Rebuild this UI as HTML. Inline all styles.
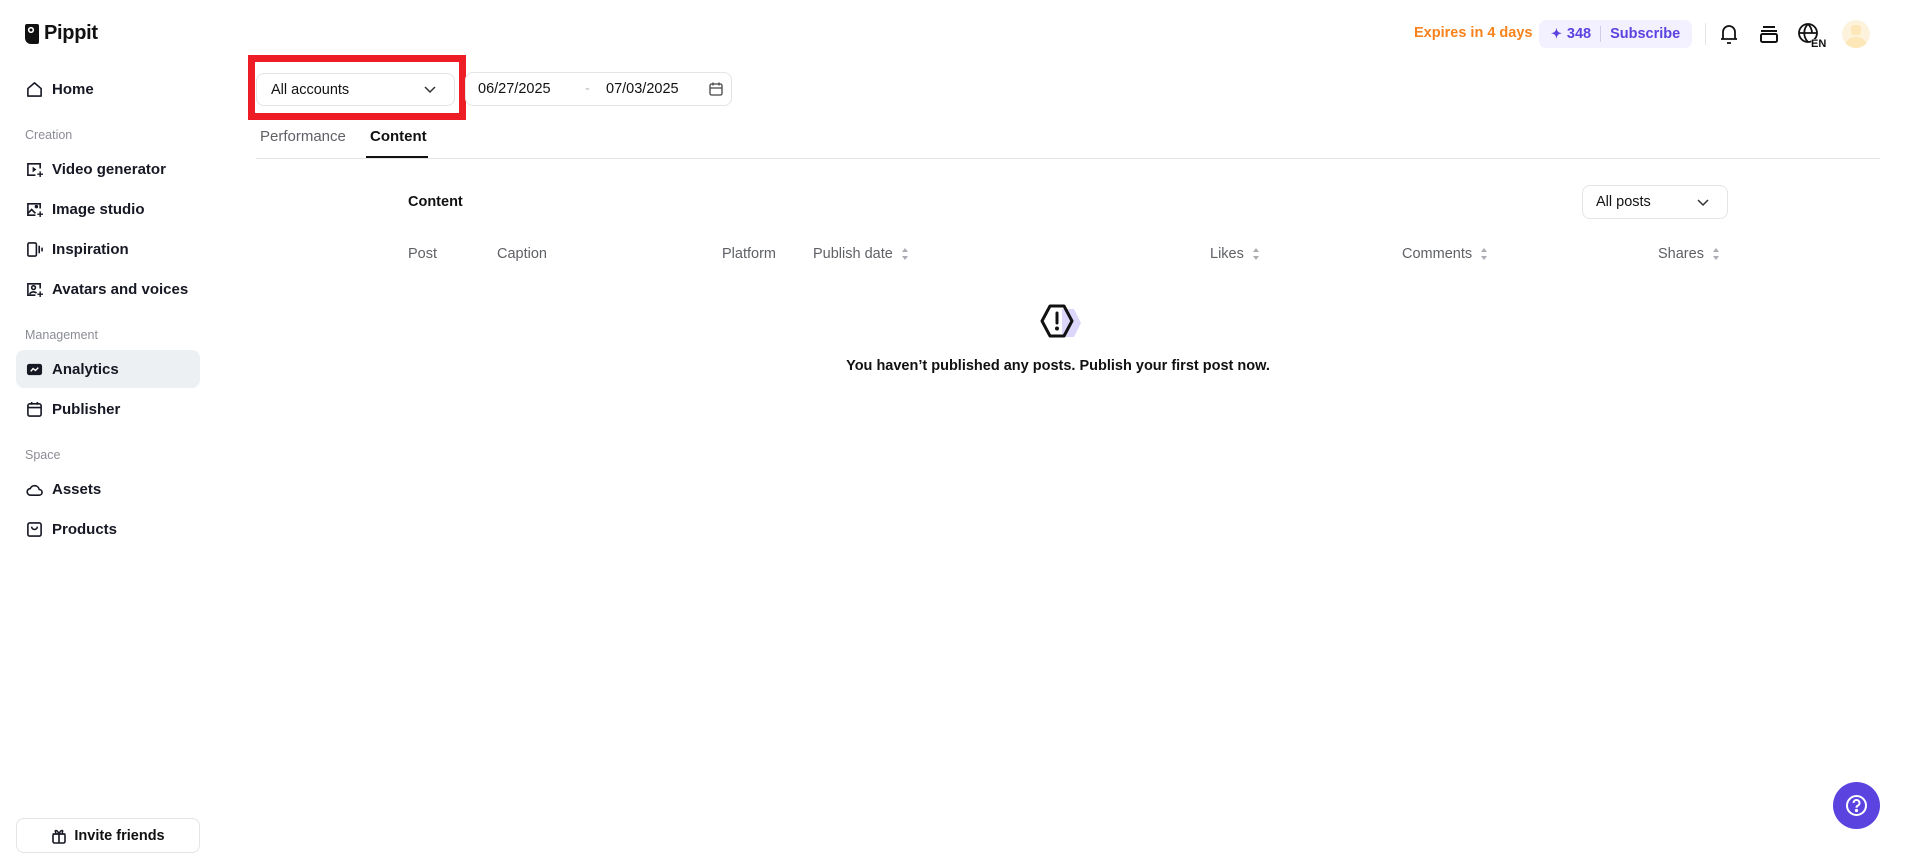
<!DOCTYPE html>
<html><head><meta charset="utf-8"><style>
*{box-sizing:border-box;margin:0;padding:0}
body{width:1920px;height:866px;background:#fff;font-family:"Liberation Sans",sans-serif;color:#111;position:relative;overflow:hidden}
.a{position:absolute;white-space:nowrap}
.nav{position:absolute;left:26px;font-size:15px;font-weight:bold;color:#161823;display:flex;align-items:center;height:20px;transform:translateY(-10px)}
.nav svg{width:17px;height:17px;margin-right:9px}
.lbl{position:absolute;left:25px;font-size:12.5px;color:#8a8d93;transform:translateY(-8px)}
.th{position:absolute;top:246px;font-size:14.5px;color:#5f6166}
.sort{display:inline-block;vertical-align:middle;margin-left:8px}
</style></head><body>
<div class="a" style="left:25px;top:22px;display:flex;align-items:center">
<svg width="14" height="21" viewBox="0 0 14 21"><path d="M2 1h10a2 2 0 0 1 2 2v16a2 2 0 0 1-2 2H6a6 6 0 0 1-6-6V3a2 2 0 0 1 2-2z" fill="#111"/><circle cx="6" cy="7" r="2.3" fill="none" stroke="#fff" stroke-width="1.6"/></svg>
<span style="font-size:20px;font-weight:bold;margin-left:5px;letter-spacing:-0.3px">Pippit</span></div>

<div class="nav" style="top:89px"><svg viewBox="0 0 18 18" fill="none" stroke="#161823" stroke-width="1.7"><path d="M2 8L9 2l7 6v8H2z" stroke-linejoin="round"/></svg>Home</div>
<div class="lbl" style="top:136px">Creation</div>
<div class="nav" style="top:169px"><svg viewBox="0 0 18 18" fill="none" stroke="#161823" stroke-width="1.7"><path d="M15 8V3H2v12h8"/><path d="M7 6v6l4-3z" fill="#161823" stroke="none"/><path d="M15 11v6M12 14h6" stroke-width="1.5"/></svg>Video generator</div>
<div class="nav" style="top:209px"><svg viewBox="0 0 18 18" fill="none" stroke="#161823" stroke-width="1.7"><path d="M15 8V3H2v12h8"/><path d="M2 13l4-4 4 4"/><circle cx="11" cy="6" r="1"/><path d="M15 11v6M12 14h6" stroke-width="1.5"/></svg>Image studio</div>
<div class="nav" style="top:249px"><svg viewBox="0 0 18 18" fill="none" stroke="#161823" stroke-width="1.7"><rect x="2" y="2" width="9" height="14" rx="1.5"/><path d="M14 5v8M17 7v4"/></svg>Inspiration</div>
<div class="nav" style="top:289px"><svg viewBox="0 0 18 18" fill="none" stroke="#161823" stroke-width="1.7"><path d="M15 8V3H2v12h8"/><circle cx="8" cy="7" r="2"/><path d="M4 14c1-3 6-3 7-1"/><path d="M15 11v6M12 14h6" stroke-width="1.5"/></svg>Avatars and voices</div>
<div class="lbl" style="top:336px">Management</div>
<div class="a" style="left:16px;top:350px;width:184px;height:38px;background:#edf0f2;border-radius:8px"></div>
<div class="nav" style="top:369px"><svg viewBox="0 0 18 18"><rect x="1" y="3" width="16" height="12" rx="2.5" fill="#161823"/><path d="M5 11l2.5-3 2.5 2 3-3" fill="none" stroke="#fff" stroke-width="1.5"/></svg>Analytics</div>
<div class="nav" style="top:409px"><svg viewBox="0 0 18 18" fill="none" stroke="#161823" stroke-width="1.7"><rect x="2" y="3" width="14" height="13" rx="2"/><path d="M2 7h14M6 1v3M12 1v3"/></svg>Publisher</div>
<div class="lbl" style="top:456px">Space</div>
<div class="nav" style="top:489px"><svg viewBox="0 0 18 18" fill="none" stroke="#161823" stroke-width="1.7"><path d="M5 15h9a3 3 0 0 0 0-6 5 5 0 0 0-9.5-1A3.5 3.5 0 0 0 5 15z"/></svg>Assets</div>
<div class="nav" style="top:529px"><svg viewBox="0 0 18 18" fill="none" stroke="#161823" stroke-width="1.7"><rect x="2" y="2" width="14" height="14" rx="2"/><path d="M6 6a3 3 0 0 0 6 0"/></svg>Products</div>

<div class="a" style="left:16px;top:818px;width:184px;height:35px;border:1px solid #e3e4e6;border-radius:8px;display:flex;align-items:center;justify-content:center;font-size:14.5px;font-weight:bold">
<svg width="16" height="16" viewBox="0 0 16 16" fill="none" stroke="#161823" stroke-width="1.6" style="margin-right:7px"><rect x="2" y="6" width="12" height="9" rx="1.5"/><path d="M1.5 6h13M8 6v9M5 5c-2-3 1-4 3 1 2-5 5-4 3-1"/></svg>Invite friends</div>

<div class="a" style="left:1414px;top:25px;font-size:14.5px;font-weight:bold;color:#f7821b">Expires in 4 days</div>
<div class="a" style="left:1539px;top:20px;width:153px;height:28px;background:#f3f1ff;border-radius:7px;font-size:14.5px;font-weight:bold;color:#5b43e0;display:flex;align-items:center;padding-left:12px">
<span style="font-size:13px;margin-right:5px">✦</span>348<span style="width:1px;height:16px;background:#cfcbe8;margin:0 9px"></span>Subscribe</div>
<div class="a" style="left:1705px;top:23px;width:1px;height:22px;background:#e3e4e6"></div>
<svg class="a" style="left:1718px;top:23px" width="22" height="22" viewBox="0 0 22 22" fill="none" stroke="#111" stroke-width="1.8"><path d="M5 16V9a6 6 0 0 1 12 0v7M3 16h16M9 20h4"/></svg>
<svg class="a" style="left:1759px;top:24px" width="20" height="20" viewBox="0 0 20 20" fill="none" stroke="#111" stroke-width="2"><path d="M4 3h12M2 7h16"/><rect x="2" y="10" width="16" height="8" rx="1.5"/></svg>
<svg class="a" style="left:1797px;top:22px" width="34" height="26" viewBox="0 0 34 26" fill="none" stroke="#111" stroke-width="1.8"><circle cx="11" cy="11" r="9"/><path d="M2 11h18M11 2c-5 5-5 13 0 18M11 2c3 3 4 6 4 9"/><text x="14" y="25" font-family="Liberation Sans" font-size="11" font-weight="bold" fill="#111" stroke="#fff" stroke-width="0.8" paint-order="stroke">EN</text></svg>
<div class="a" style="left:1842px;top:20px;width:28px;height:28px;border-radius:50%;background:#fdf3dc;overflow:hidden"><div style="position:absolute;left:9px;top:5px;width:10px;height:10px;border-radius:3px;background:#fde7b8"></div><div style="position:absolute;left:4px;top:17px;width:20px;height:14px;border-radius:50%;background:#fde7b8"></div></div>

<div class="a" style="left:248px;top:55px;width:218px;height:65px;border:7px solid #ee1c25"></div>
<div class="a" style="left:256px;top:73px;width:199px;height:33px;border:1px solid #e3e4e6;border-radius:8px;font-size:14.5px;display:flex;align-items:center;padding-left:14px">All accounts
<svg style="position:absolute;right:18px;top:12px" width="12" height="8" viewBox="0 0 12 8" fill="none" stroke="#333" stroke-width="1.5"><path d="M1 1l5 5 5-5"/></svg></div>
<div class="a" style="left:465px;top:72px;width:267px;height:34px;border:1px solid #e3e4e6;border-radius:8px;font-size:14.5px">
<span class="a" style="left:12px;top:8px">06/27/2025</span><span class="a" style="left:119px;top:8px;color:#bbb">-</span><span class="a" style="left:140px;top:8px">07/03/2025</span>
<svg class="a" style="left:243px;top:9px" width="14" height="14" viewBox="0 0 14 14" fill="none" stroke="#444" stroke-width="1.3"><rect x="1" y="2" width="12" height="11" rx="1.5"/><path d="M1 6h12M4 0.5v3M10 0.5v3"/></svg></div>

<div class="a" style="left:260px;top:128px;font-size:15px;color:#5f6166">Performance</div>
<div class="a" style="left:370px;top:128px;font-size:15px;font-weight:bold">Content</div>
<div class="a" style="left:256px;top:158px;width:1624px;height:1px;background:#e3e4e6"></div>
<div class="a" style="left:366px;top:156px;width:62px;height:2px;background:#111"></div>

<div class="a" style="left:408px;top:194px;font-size:14.5px;font-weight:bold">Content</div>
<div class="a" style="left:1582px;top:185px;width:146px;height:34px;border:1px solid #e3e4e6;border-radius:8px;font-size:14.5px;display:flex;align-items:center;padding-left:13px">All posts
<svg style="position:absolute;right:18px;top:13px" width="12" height="8" viewBox="0 0 12 8" fill="none" stroke="#333" stroke-width="1.5"><path d="M1 1l5 5 5-5"/></svg></div>

<div class="th" style="left:408px">Post</div>
<div class="th" style="left:497px">Caption</div>
<div class="th" style="left:722px">Platform</div>
<div class="th" style="left:813px">Publish date<svg class="sort" width="8" height="14" viewBox="0 0 8 14"><path d="M4 1l3 4H1zM4 13l3-4H1z" fill="#aaadb3"/></svg></div>
<div class="th" style="left:1210px">Likes<svg class="sort" width="8" height="14" viewBox="0 0 8 14"><path d="M4 1l3 4H1zM4 13l3-4H1z" fill="#aaadb3"/></svg></div>
<div class="th" style="left:1402px">Comments<svg class="sort" width="8" height="14" viewBox="0 0 8 14"><path d="M4 1l3 4H1zM4 13l3-4H1z" fill="#aaadb3"/></svg></div>
<div class="th" style="left:1658px">Shares<svg class="sort" width="8" height="14" viewBox="0 0 8 14"><path d="M4 1l3 4H1zM4 13l3-4H1z" fill="#aaadb3"/></svg></div>

<svg class="a" style="left:1038px;top:303px" width="44" height="40" viewBox="0 0 44 40"><path d="M24 6h12l7 14-7 14H24z" fill="#dcd6fb"/><path d="M12 3h14l8 15-8 15H12L4 18z" fill="none" stroke="#111" stroke-width="3" stroke-linejoin="round"/><path d="M19 10v10" stroke="#111" stroke-width="3" stroke-linecap="round"/><circle cx="19" cy="25.5" r="2" fill="#111"/></svg>
<div class="a" style="left:0;width:2116px;text-align:center;top:358px;font-size:14.5px;font-weight:bold">You haven’t published any posts. Publish your first post now.</div>

<div class="a" style="left:1833px;top:782px;width:47px;height:47px;border-radius:50%;background:#5b43e0"><svg style="position:absolute;left:12px;top:12px" width="23" height="23" viewBox="0 0 23 23" fill="none" stroke="#fff" stroke-width="2"><circle cx="11.5" cy="11.5" r="9.5"/><path d="M8.5 9a3 3 0 1 1 4 2.8c-.8.4-1 1-1 2"/><circle cx="11.5" cy="16.5" r="0.6" fill="#fff"/></svg></div>
</body></html>
